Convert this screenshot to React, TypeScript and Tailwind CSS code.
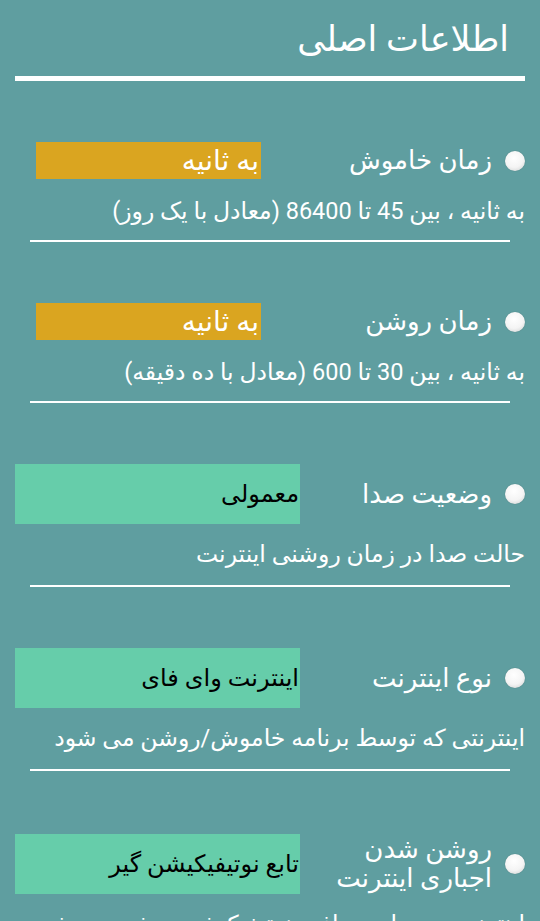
const font = { fontFamily: 'Roboto, "DejaVu Sans", sans-serif' };

type Row = {
  label: React.ReactNode;
  value: string;
  hint: string;
  kind: "gold" | "green";
};

const rows: Row[] = [
  {
    label: "زمان خاموش",
    value: "به ثانیه",
    hint: "به ثانیه ، بین 45 تا 86400 (معادل با یک روز)",
    kind: "gold",
  },
  {
    label: "زمان روشن",
    value: "به ثانیه",
    hint: "به ثانیه ، بین 30 تا 600 (معادل با ده دقیقه)",
    kind: "gold",
  },
  {
    label: "وضعیت صدا",
    value: "معمولی",
    hint: "حالت صدا در زمان روشنی اینترنت",
    kind: "green",
  },
  {
    label: "نوع اینترنت",
    value: "اینترنت وای فای",
    hint: "اینترنتی که توسط برنامه خاموش/روشن می شود",
    kind: "green",
  },
  {
    label: (
      <>
        روشن شدن
        <br />
        اجباری اینترنت
      </>
    ),
    value: "تابع نوتیفیکیشن گیر",
    hint: "اینترنت در زمان دریافت نوتیفیکیشن روشن می شود",
    kind: "green",
  },
];

const Radio = () => (
  <div className="w-[20px] h-[20px] shrink-0 rounded-full bg-[radial-gradient(circle_at_45%_35%,#ffffff_0%,#f4f4f4_55%,#c9cccc_100%)] shadow-[0_0_1px_rgba(0,0,0,0.35)]" />
);

const SettingRow = ({ row, last }: { row: Row; last: boolean }) => {
  const gold = row.kind === "gold";
  return (
    <div className={last ? "mt-[63px]" : "mt-[61px]"}>
      {/* Radio + label on the right, value box on the left */}
      <div className="flex items-center justify-between">
        <div className="flex items-center gap-[13px]">
          <Radio />
          <div className="text-white text-[26px] leading-[29px] text-right">
            {row.label}
          </div>
        </div>
        {gold ? (
          <div className="ml-[21px] w-[225px] h-[37px] bg-[#DAA520] text-white text-[28px] leading-[37px] text-right pr-[2px] whitespace-nowrap">
            {row.value}
          </div>
        ) : (
          <div className="w-[285px] h-[60px] bg-[#66CDAA] text-black text-[24px] leading-[60px] text-right pr-[1px] whitespace-nowrap">
            {row.value}
          </div>
        )}
      </div>

      {/* Hint */}
      <p
        className={
          "text-white text-[23.5px] leading-[30px] text-right whitespace-nowrap " +
          (gold ? "mt-[17px]" : "mt-[15px]")
        }
      >
        {row.hint}
      </p>

      {/* Separator */}
      <div
        className={
          "mx-[15px] h-[2px] bg-white " + (gold ? "mt-[14px]" : "mt-[16px]")
        }
      />
    </div>
  );
};

export default function App() {
  return (
    <div
      dir="rtl"
      style={font}
      className="w-[540px] h-[921px] overflow-hidden bg-[#5F9EA0] px-[15px]"
    >
      {/* Header */}
      <div className="pt-[16px] pb-[12px] pr-[16px]">
        <h1 className="text-white text-[35px] leading-[48px]">اطلاعات اصلی</h1>
      </div>
      <div className="h-[5px] bg-white" />

      {rows.map((row, i) => (
        <SettingRow key={i} row={row} last={i === rows.length - 1} />
      ))}
    </div>
  );
}
